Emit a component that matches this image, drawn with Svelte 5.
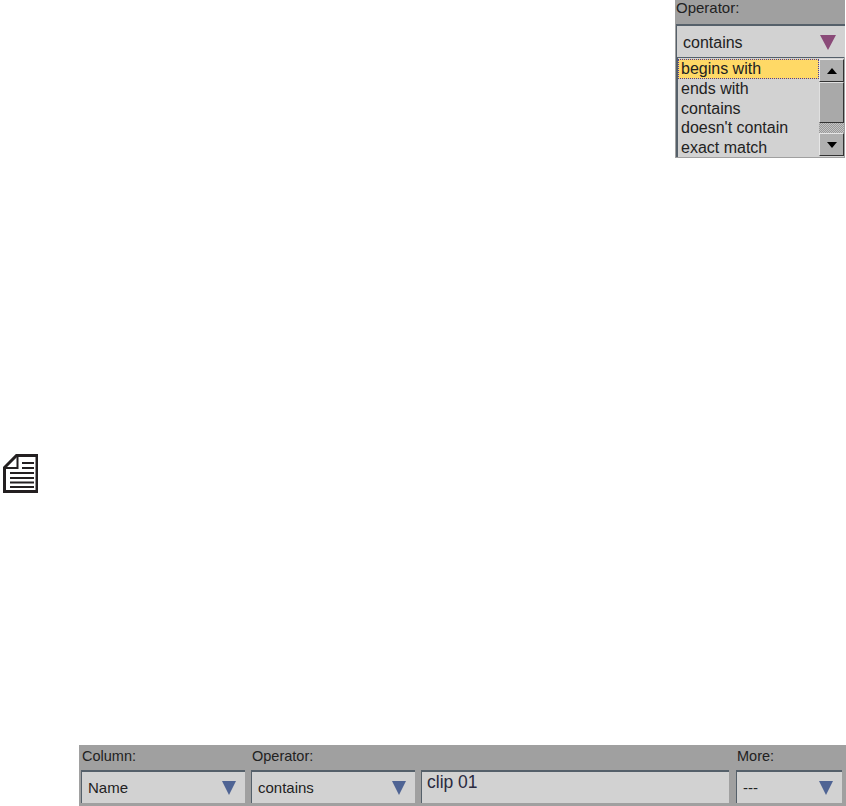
<script>
  const options = ["begins with", "ends with", "contains", "doesn't contain", "exact match"];
  const fields = [
    { label: "Column:", value: "Name", width: 164 },
    { label: "Operator:", value: "contains", width: 164 },
    { label: "", value: "clip 01", width: 308, text: true },
    { label: "More:", value: "---", width: 106 }
  ];
</script>

<main class="page">
  <section class="operator">
    <div class="op-label">Operator:</div>
    <div class="op-select">
      <span>contains</span>
      <svg width="16" height="15" viewBox="0 0 16 15"><path d="M0 0H16L8 15Z" fill="#8a4a78" /></svg>
    </div>
    <div class="op-list">
      <ul>
        {#each options as opt, i}
          <li class:active={i == 0}>{opt}</li>
        {/each}
      </ul>
      <div class="scroll">
        <div class="btn"><svg width="10" height="6" viewBox="0 0 10 6"><path d="M5 0L10 6H0Z" /></svg></div>
        <div class="thumb"></div>
        <div class="track"></div>
        <div class="btn"><svg width="10" height="6" viewBox="0 0 10 6"><path d="M0 0H10L5 6Z" /></svg></div>
      </div>
    </div>
  </section>

  <svg class="note" width="36" height="40" viewBox="0 0 36 40" fill="none" stroke="#231f20">
    <path d="M2.5 38.5V14.5L14.5 2.5H35V38.5Z" stroke-width="3" />
    <path d="M2.5 15H15.5V2.5" stroke-width="2" />
    <path d="M20 10H32M20 15H32M8 20H32M8 25H32M8 29.500H32M8 34H32" stroke-width="2" />
  </svg>

  <section class="filter">
    {#each fields as f}
      <div class="field" style="width: {f.width}px">
        <div class="label">{f.label}</div>
        <div class="box" class:text={f.text}>
          <span>{f.value}</span>
          {#if !f.text}
            <svg width="14" height="14" viewBox="0 0 14 14"><path d="M0 0H14L7 14Z" fill="#4f6494" /></svg>
          {/if}
        </div>
      </div>
    {/each}
  </section>
</main>

<style>
  :global(body) {
    background: #fff;
  }
  .page {
    width: 846px;
    height: 806px;
    overflow: hidden;
    font-family: "Liberation Sans", Arial, sans-serif;
    color: #222;
  }
  .operator {
    width: 170px;
    height: 158px;
    margin-left: 675px;
    background: #a0a0a0;
    display: flex;
    flex-direction: column;
  }
  .op-label {
    height: 24px;
    font-size: 15px;
    line-height: 15px;
    padding-left: 1px;
    box-sizing: border-box;
  }
  .op-select {
    height: 33px;
    margin-left: 1px;
    box-sizing: border-box;
    background: #d2d2d2;
    border-top: 2px solid #55606a;
    border-left: 1px solid #55606a;
    display: flex;
    align-items: center;
    justify-content: space-between;
    padding: 2px 9px 0 6px;
    font-size: 16px;
  }
  .op-list {
    height: 100px;
    margin-left: 1px;
    margin-right: 1px;
    box-sizing: border-box;
    background: #d2d2d2;
    border-left: 2px solid #55606a;
    border-top: 1px solid #55606a;
    display: flex;
  }
  ul {
    list-style: none;
    margin: 0;
    padding: 1px 0 0;
    flex: 1;
  }
  li {
    height: 19.750px;
    line-height: 20px;
    font-size: 16px;
    padding-left: 3px;
    box-sizing: border-box;
  }
  li.active {
    background: #ffd966;
    outline: 1px dotted #4a3aa0;
    outline-offset: -1px;
  }
  .scroll {
    width: 25px;
    display: flex;
    flex-direction: column;
    background: #d2d2d2;
    padding-top: 1px;
  }
  .btn {
    height: 23px;
    flex: none;
    display: flex;
    align-items: center;
    justify-content: center;
    background: #b0b0b0;
    border: 1px solid;
    border-color: #e6e6e6 #333 #333 #e6e6e6;
    box-sizing: border-box;
  }
  .thumb {
    height: 41px;
    flex: none;
    background: #a9a9a9;
    border: 1px solid;
    border-color: #e0e0e0 #333 #333 #e0e0e0;
    box-sizing: border-box;
  }
  .track {
    height: 10px;
    flex: none;
    background: repeating-conic-gradient(#999 0 25%, #c4c4c4 0 50%) 0 0 / 2px 2px;
  }
  .note {
    display: block;
    margin-top: 295px;
    margin-left: 2px;
  }
  .filter {
    width: 767px;
    height: 61px;
    margin-top: 252px;
    margin-left: 79px;
    background: #a0a0a0;
    display: flex;
    gap: 6px;
    box-sizing: border-box;
    padding-left: 2px;
  }
  .field:last-child {
    margin-left: 1px;
  }
  .label {
    height: 25px;
    font-size: 14.5px;
    line-height: 22px;
    padding-left: 1px;
    box-sizing: border-box;
  }
  .box {
    height: 33px;
    box-sizing: border-box;
    background: #d2d2d2;
    border-top: 2px solid #55606a;
    border-left: 1px solid #55606a;
    display: flex;
    align-items: center;
    justify-content: space-between;
    padding: 0 9px 0 6px;
    font-size: 15px;
  }
  .box.text {
    align-items: flex-start;
    padding: 0 0 0 5px;
    font-size: 17.500px;
    color: #2a2a40;
  }
</style>
